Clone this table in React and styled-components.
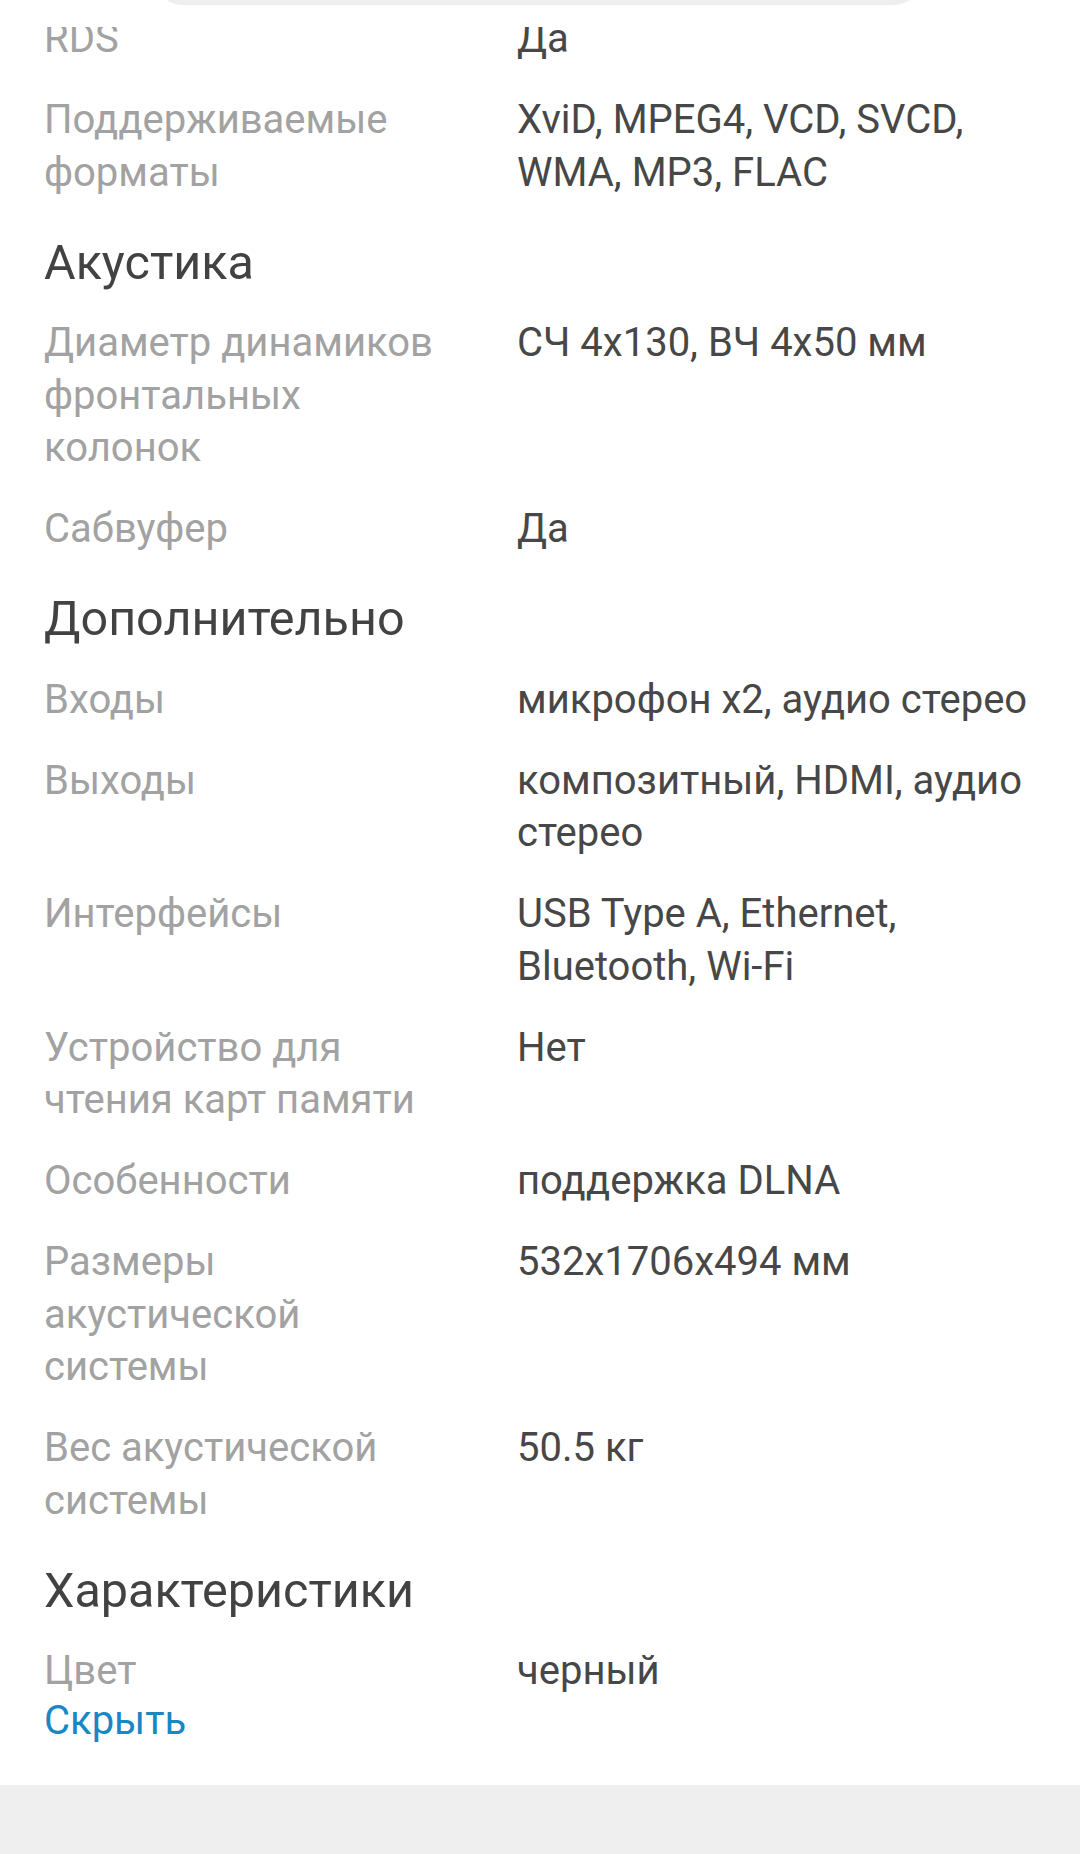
import styled, { createGlobalStyle } from 'styled-components';

const GlobalStyle = createGlobalStyle`
    html, body {
        margin: 0;
        padding: 0;
        background: #ffffff;
    }
    body {
        font-family: Roboto, "Noto Sans", "Liberation Sans", sans-serif;
        -webkit-font-smoothing: antialiased;
    }
`;

const specs = [
    { type: 'row', label: 'RDS', value: 'Да' },
    { type: 'row', label: 'Поддерживаемые форматы', value: 'XviD, MPEG4, VCD, SVCD, WMA, MP3, FLAC' },
    { type: 'heading', title: 'Акустика' },
    { type: 'row', label: 'Диаметр динамиков фронтальных колонок', value: 'СЧ 4x130, ВЧ 4x50 мм' },
    { type: 'row', label: 'Сабвуфер', value: 'Да' },
    { type: 'heading', title: 'Дополнительно' },
    { type: 'row', label: 'Входы', value: 'микрофон x2, аудио стерео' },
    { type: 'row', label: 'Выходы', value: 'композитный, HDMI, аудио стерео' },
    { type: 'row', label: 'Интерфейсы', value: 'USB Type A, Ethernet, Bluetooth, Wi-Fi' },
    { type: 'row', label: 'Устройство для чтения карт памяти', value: 'Нет' },
    { type: 'row', label: 'Особенности', value: 'поддержка DLNA' },
    { type: 'row', label: 'Размеры акустической системы', value: '532x1706x494 мм' },
    { type: 'row', label: 'Вес акустической системы', value: '50.5 кг' },
    { type: 'heading', title: 'Характеристики' },
    { type: 'row', label: 'Цвет', value: 'черный' },
];

const Page = styled.div`
    position: relative;
    width: 1080px;
    min-height: 1854px;
    background: #efefef;
    overflow: hidden;
`;

const TopBar = styled.div`
    position: absolute;
    top: 0;
    left: 0;
    right: 0;
    height: 27px;
    background: #ffffff;
    z-index: 2;
`;

const SearchPill = styled.div`
    position: absolute;
    left: 153px;
    width: 770px;
    top: -55px;
    height: 60px;
    border-radius: 30px;
    background: #eeeeee;
`;

const Sheet = styled.section`
    background: #ffffff;
    padding: 13px 40px 41px 44px;
`;

const List = styled.div`
    display: flex;
    flex-direction: column;
    gap: 28.5px;
`;

const SectionTitle = styled.h3`
    margin: 9px 0 0;
    font-size: 48.5px;
    font-weight: 400;
    line-height: 52px;
    color: #424242;
`;

const Row = styled.div`
    display: grid;
    grid-template-columns: 410px 1fr;
    column-gap: 63px;
    font-size: 40px;
    line-height: 52.5px;
`;

const Label = styled.div`
    color: #a2a2a2;
`;

const Value = styled.div`
    color: #474747;
`;

const HideLink = styled.a`
    display: block;
    font-size: 40px;
    line-height: 46px;
    color: #1a86c4;
    text-decoration: none;
`;

const Footer = styled.div`
    height: 71px;
    background: #efefef;
`;

export default function App() {
    return (
        <Page>
            <GlobalStyle />
            <TopBar>
                <SearchPill />
            </TopBar>
            <Sheet>
                <List>
                    {specs.map((item, i) =>
                        item.type === 'heading' ? (
                            <SectionTitle key={i}>{item.title}</SectionTitle>
                        ) : (
                            <Row key={i}>
                                <Label>{item.label}</Label>
                                <Value>{item.value}</Value>
                            </Row>
                        ),
                    )}
                </List>
                <HideLink href="#">Скрыть</HideLink>
            </Sheet>
            <Footer />
        </Page>
    );
}
